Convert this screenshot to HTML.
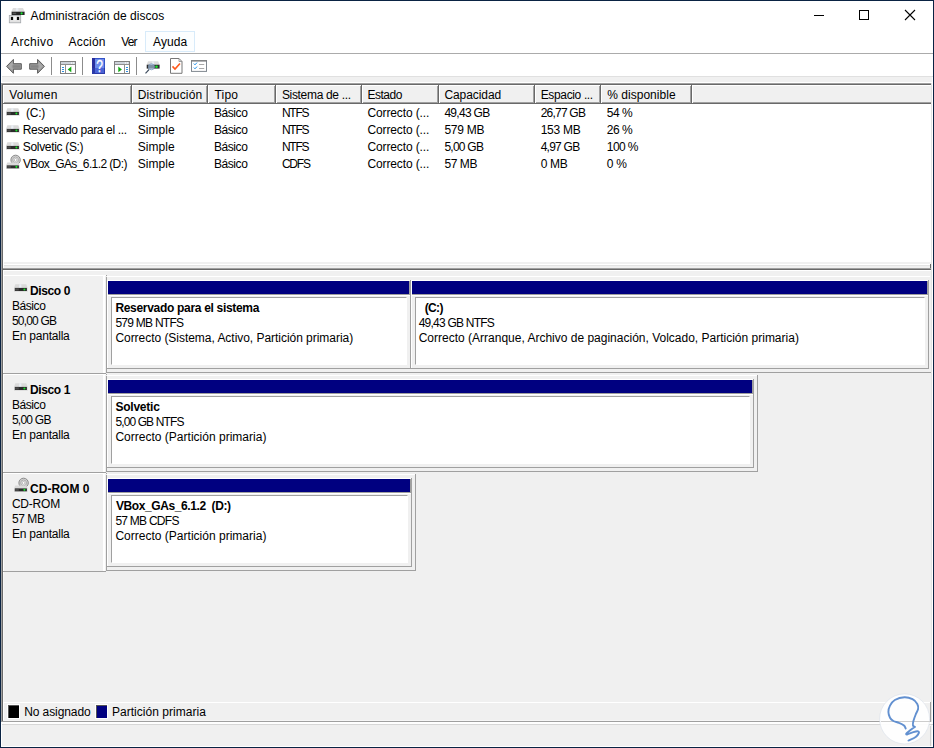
<!DOCTYPE html>
<html lang="es">
<head>
<meta charset="utf-8">
<title>Administración de discos</title>
<style>
html,body{margin:0;padding:0}
body{width:934px;height:748px;position:relative;overflow:hidden;background:#f0f0f0;font:12px "Liberation Sans",sans-serif;color:#000}
.a{position:absolute;box-sizing:border-box}
.t{position:absolute;white-space:pre;line-height:14px;height:14px}
.w{background:#fff}
.g{background:#a0a0a0}
.d{background:#696969}
.navy{background:#000080}
svg{position:absolute;overflow:visible}
</style>
</head>
<body>
<!-- title + menu + toolbar -->
<div class="a w" style="left:1px;top:1px;width:932px;height:75px"></div>
<div class="a" style="left:1px;top:53px;width:932px;height:1px;background:#ababab"></div>
<div class="a" style="left:1px;top:76px;width:932px;height:1px;background:#e0e0e0"></div>
<div class="a" style="left:145px;top:31px;width:50px;height:21px;border:1px solid #d8ebfa;background:#fcfeff"></div>
<!-- list view -->
<div class="a w" style="left:1px;top:82px;width:932px;height:1px"></div>
<div class="a" id="list" style="left:1px;top:83px;width:931px;height:181px;background:#fff;border-left:1px solid #a0a0a0;border-top:1px solid #a0a0a0;border-right:1px solid #e3e3e3;border-bottom:1px solid #fff"></div>
<div class="a" style="left:2px;top:84px;width:929px;height:179px;border-left:1px solid #696969;border-top:1px solid #696969;border-bottom:1px solid #f0f0f0"></div>
<!-- splitter + lower pane -->
<div class="a" style="left:3px;top:265px;width:928px;height:1px;background:#e3e3e3"></div>
<div class="a g" style="left:1px;top:83px;width:1px;height:639px"></div>
<div class="a d" style="left:2px;top:84px;width:1px;height:637px"></div>
<div class="a w" style="left:3px;top:85px;width:1px;height:636px"></div>
<div class="a" style="left:4px;top:262px;width:927px;height:2px;background:#f0f0f0"></div>
<div class="a w" style="left:3px;top:264px;width:929px;height:1px"></div>
<div class="a d" style="left:930px;top:264px;width:1px;height:5px"></div>
<div class="a g" style="left:3px;top:268px;width:928px;height:1px"></div>
<div class="a d" style="left:3px;top:269px;width:928px;height:1px"></div>
<div class="a w" style="left:3px;top:270px;width:928px;height:1px"></div>
<div class="a" style="left:931px;top:83px;width:1px;height:639px;background:#e3e3e3"></div>
<div class="a w" style="left:932px;top:77px;width:1px;height:670px"></div>
<div class="a" style="left:3px;top:85px;width:129px;height:19px;background:#f0f0f0;"></div>
<div class="a" style="left:3px;top:85px;width:129px;height:1px;background:#fff;"></div>
<div class="a" style="left:3px;top:85px;width:1px;height:18px;background:#fff;"></div>
<div class="a" style="left:4px;top:102px;width:128px;height:1px;background:#a0a0a0;"></div>
<div class="a" style="left:3px;top:103px;width:129px;height:1px;background:#696969;"></div>
<div class="a" style="left:130px;top:86px;width:1px;height:17px;background:#a0a0a0;"></div>
<div class="a" style="left:131px;top:85px;width:1px;height:19px;background:#696969;"></div>
<div class="a" style="left:132px;top:85px;width:76px;height:19px;background:#f0f0f0;"></div>
<div class="a" style="left:132px;top:85px;width:76px;height:1px;background:#fff;"></div>
<div class="a" style="left:132px;top:85px;width:1px;height:18px;background:#fff;"></div>
<div class="a" style="left:133px;top:102px;width:75px;height:1px;background:#a0a0a0;"></div>
<div class="a" style="left:132px;top:103px;width:76px;height:1px;background:#696969;"></div>
<div class="a" style="left:206px;top:86px;width:1px;height:17px;background:#a0a0a0;"></div>
<div class="a" style="left:207px;top:85px;width:1px;height:19px;background:#696969;"></div>
<div class="a" style="left:208px;top:85px;width:68px;height:19px;background:#f0f0f0;"></div>
<div class="a" style="left:208px;top:85px;width:68px;height:1px;background:#fff;"></div>
<div class="a" style="left:208px;top:85px;width:1px;height:18px;background:#fff;"></div>
<div class="a" style="left:209px;top:102px;width:67px;height:1px;background:#a0a0a0;"></div>
<div class="a" style="left:208px;top:103px;width:68px;height:1px;background:#696969;"></div>
<div class="a" style="left:274px;top:86px;width:1px;height:17px;background:#a0a0a0;"></div>
<div class="a" style="left:275px;top:85px;width:1px;height:19px;background:#696969;"></div>
<div class="a" style="left:276px;top:85px;width:86px;height:19px;background:#f0f0f0;"></div>
<div class="a" style="left:276px;top:85px;width:86px;height:1px;background:#fff;"></div>
<div class="a" style="left:276px;top:85px;width:1px;height:18px;background:#fff;"></div>
<div class="a" style="left:277px;top:102px;width:85px;height:1px;background:#a0a0a0;"></div>
<div class="a" style="left:276px;top:103px;width:86px;height:1px;background:#696969;"></div>
<div class="a" style="left:360px;top:86px;width:1px;height:17px;background:#a0a0a0;"></div>
<div class="a" style="left:361px;top:85px;width:1px;height:19px;background:#696969;"></div>
<div class="a" style="left:362px;top:85px;width:77px;height:19px;background:#f0f0f0;"></div>
<div class="a" style="left:362px;top:85px;width:77px;height:1px;background:#fff;"></div>
<div class="a" style="left:362px;top:85px;width:1px;height:18px;background:#fff;"></div>
<div class="a" style="left:363px;top:102px;width:76px;height:1px;background:#a0a0a0;"></div>
<div class="a" style="left:362px;top:103px;width:77px;height:1px;background:#696969;"></div>
<div class="a" style="left:437px;top:86px;width:1px;height:17px;background:#a0a0a0;"></div>
<div class="a" style="left:438px;top:85px;width:1px;height:19px;background:#696969;"></div>
<div class="a" style="left:439px;top:85px;width:96px;height:19px;background:#f0f0f0;"></div>
<div class="a" style="left:439px;top:85px;width:96px;height:1px;background:#fff;"></div>
<div class="a" style="left:439px;top:85px;width:1px;height:18px;background:#fff;"></div>
<div class="a" style="left:440px;top:102px;width:95px;height:1px;background:#a0a0a0;"></div>
<div class="a" style="left:439px;top:103px;width:96px;height:1px;background:#696969;"></div>
<div class="a" style="left:533px;top:86px;width:1px;height:17px;background:#a0a0a0;"></div>
<div class="a" style="left:534px;top:85px;width:1px;height:19px;background:#696969;"></div>
<div class="a" style="left:535px;top:85px;width:66px;height:19px;background:#f0f0f0;"></div>
<div class="a" style="left:535px;top:85px;width:66px;height:1px;background:#fff;"></div>
<div class="a" style="left:535px;top:85px;width:1px;height:18px;background:#fff;"></div>
<div class="a" style="left:536px;top:102px;width:65px;height:1px;background:#a0a0a0;"></div>
<div class="a" style="left:535px;top:103px;width:66px;height:1px;background:#696969;"></div>
<div class="a" style="left:599px;top:86px;width:1px;height:17px;background:#a0a0a0;"></div>
<div class="a" style="left:600px;top:85px;width:1px;height:19px;background:#696969;"></div>
<div class="a" style="left:601px;top:85px;width:91px;height:19px;background:#f0f0f0;"></div>
<div class="a" style="left:601px;top:85px;width:91px;height:1px;background:#fff;"></div>
<div class="a" style="left:601px;top:85px;width:1px;height:18px;background:#fff;"></div>
<div class="a" style="left:602px;top:102px;width:90px;height:1px;background:#a0a0a0;"></div>
<div class="a" style="left:601px;top:103px;width:91px;height:1px;background:#696969;"></div>
<div class="a" style="left:690px;top:86px;width:1px;height:17px;background:#a0a0a0;"></div>
<div class="a" style="left:691px;top:85px;width:1px;height:19px;background:#696969;"></div>
<div class="a" style="left:692px;top:85px;width:239px;height:19px;background:#f0f0f0;"></div>
<div class="a" style="left:692px;top:85px;width:239px;height:1px;background:#fff;"></div>
<div class="a" style="left:692px;top:85px;width:1px;height:18px;background:#fff;"></div>
<div class="a" style="left:693px;top:102px;width:238px;height:1px;background:#a0a0a0;"></div>
<div class="a" style="left:692px;top:103px;width:239px;height:1px;background:#696969;"></div>
<div class="a" style="left:3px;top:275px;width:103px;height:1px;background:#fff;"></div>
<div class="a" style="left:3px;top:275px;width:1px;height:99px;background:#fff;"></div>
<div class="a" style="left:103px;top:275px;width:2px;height:99px;background:#fff;"></div>
<div class="a" style="left:3px;top:373px;width:103px;height:1px;background:#a0a0a0;"></div>
<div class="a" style="left:106px;top:275px;width:1px;height:1px;background:#a0a0a0;"></div>
<div class="a" style="left:106px;top:277px;width:1px;height:96px;background:#a0a0a0;"></div>
<div class="a" style="left:107px;top:276px;width:823px;height:1px;background:#fff;"></div>
<div class="a" style="left:106px;top:372px;width:825px;height:1px;background:#a0a0a0;"></div>
<div class="a" style="left:107px;top:280px;width:303px;height:1px;background:#fff;"></div>
<div class="a" style="left:107px;top:280px;width:1px;height:88px;background:#fff;"></div>
<div class="a" style="left:108px;top:281px;width:301px;height:13px;background:#000080;"></div>
<div class="a" style="left:409px;top:281px;width:1px;height:14px;background:#a0a0a0;"></div>
<div class="a" style="left:108px;top:294px;width:302px;height:1px;background:#a0a0a0;"></div>
<div class="a" style="left:108px;top:295px;width:302px;height:1px;background:#fff;"></div>
<div class="a" style="left:410px;top:280px;width:1px;height:89px;background:#a0a0a0;"></div>
<div class="a" style="left:107px;top:368px;width:304px;height:1px;background:#a0a0a0;"></div>
<div class="a" style="left:111px;top:297px;width:296px;height:68px;background:#fff;border-left:1px solid #a0a0a0;border-top:1px solid #a0a0a0;border-right:1px solid #fff;border-bottom:1px solid #fff"></div>
<div class="a" style="left:411px;top:280px;width:517px;height:1px;background:#fff;"></div>
<div class="a" style="left:411px;top:280px;width:1px;height:88px;background:#fff;"></div>
<div class="a" style="left:412px;top:281px;width:515px;height:13px;background:#000080;"></div>
<div class="a" style="left:927px;top:281px;width:1px;height:14px;background:#a0a0a0;"></div>
<div class="a" style="left:412px;top:294px;width:516px;height:1px;background:#a0a0a0;"></div>
<div class="a" style="left:412px;top:295px;width:516px;height:1px;background:#fff;"></div>
<div class="a" style="left:928px;top:280px;width:1px;height:89px;background:#a0a0a0;"></div>
<div class="a" style="left:411px;top:368px;width:518px;height:1px;background:#a0a0a0;"></div>
<div class="a" style="left:415px;top:297px;width:510px;height:68px;background:#fff;border-left:1px solid #a0a0a0;border-top:1px solid #a0a0a0;border-right:1px solid #fff;border-bottom:1px solid #fff"></div>
<div class="a" style="left:3px;top:374px;width:103px;height:1px;background:#fff;"></div>
<div class="a" style="left:3px;top:374px;width:1px;height:99px;background:#fff;"></div>
<div class="a" style="left:103px;top:374px;width:2px;height:99px;background:#fff;"></div>
<div class="a" style="left:3px;top:472px;width:103px;height:1px;background:#a0a0a0;"></div>
<div class="a" style="left:106px;top:374px;width:1px;height:1px;background:#a0a0a0;"></div>
<div class="a" style="left:106px;top:376px;width:1px;height:96px;background:#a0a0a0;"></div>
<div class="a" style="left:107px;top:375px;width:650px;height:1px;background:#fff;"></div>
<div class="a" style="left:106px;top:471px;width:652px;height:1px;background:#a0a0a0;"></div>
<div class="a" style="left:757px;top:375px;width:1px;height:97px;background:#a0a0a0;"></div>
<div class="a" style="left:107px;top:379px;width:646px;height:1px;background:#fff;"></div>
<div class="a" style="left:107px;top:379px;width:1px;height:88px;background:#fff;"></div>
<div class="a" style="left:108px;top:380px;width:644px;height:13px;background:#000080;"></div>
<div class="a" style="left:752px;top:380px;width:1px;height:14px;background:#a0a0a0;"></div>
<div class="a" style="left:108px;top:393px;width:645px;height:1px;background:#a0a0a0;"></div>
<div class="a" style="left:108px;top:394px;width:645px;height:1px;background:#fff;"></div>
<div class="a" style="left:753px;top:379px;width:1px;height:89px;background:#a0a0a0;"></div>
<div class="a" style="left:107px;top:467px;width:647px;height:1px;background:#a0a0a0;"></div>
<div class="a" style="left:111px;top:396px;width:639px;height:68px;background:#fff;border-left:1px solid #a0a0a0;border-top:1px solid #a0a0a0;border-right:1px solid #fff;border-bottom:1px solid #fff"></div>
<div class="a" style="left:3px;top:473px;width:103px;height:1px;background:#fff;"></div>
<div class="a" style="left:3px;top:473px;width:1px;height:99px;background:#fff;"></div>
<div class="a" style="left:103px;top:473px;width:2px;height:99px;background:#fff;"></div>
<div class="a" style="left:3px;top:571px;width:103px;height:1px;background:#a0a0a0;"></div>
<div class="a" style="left:106px;top:473px;width:1px;height:1px;background:#a0a0a0;"></div>
<div class="a" style="left:106px;top:475px;width:1px;height:96px;background:#a0a0a0;"></div>
<div class="a" style="left:107px;top:474px;width:308px;height:1px;background:#fff;"></div>
<div class="a" style="left:106px;top:570px;width:310px;height:1px;background:#a0a0a0;"></div>
<div class="a" style="left:415px;top:474px;width:1px;height:97px;background:#a0a0a0;"></div>
<div class="a" style="left:107px;top:478px;width:304px;height:1px;background:#fff;"></div>
<div class="a" style="left:107px;top:478px;width:1px;height:88px;background:#fff;"></div>
<div class="a" style="left:108px;top:479px;width:302px;height:13px;background:#000080;"></div>
<div class="a" style="left:410px;top:479px;width:1px;height:14px;background:#a0a0a0;"></div>
<div class="a" style="left:108px;top:492px;width:303px;height:1px;background:#a0a0a0;"></div>
<div class="a" style="left:108px;top:493px;width:303px;height:1px;background:#fff;"></div>
<div class="a" style="left:411px;top:478px;width:1px;height:89px;background:#a0a0a0;"></div>
<div class="a" style="left:107px;top:566px;width:305px;height:1px;background:#a0a0a0;"></div>
<div class="a" style="left:111px;top:495px;width:297px;height:68px;background:#fff;border-left:1px solid #a0a0a0;border-top:1px solid #a0a0a0;border-right:1px solid #fff;border-bottom:1px solid #fff"></div>
<!-- legend -->
<div class="a w" style="left:3px;top:702px;width:927px;height:1px"></div>
<div class="a" style="left:3px;top:720px;width:927px;height:1px;background:#f6f6f6"></div>
<div class="a g" style="left:1px;top:721px;width:930px;height:1px"></div>
<div class="a g" style="left:930px;top:702px;width:1px;height:20px"></div>
<div class="a" style="left:930px;top:726px;width:1px;height:20px;background:#d0d0d0"></div>
<div class="a w" style="left:1px;top:722px;width:932px;height:2px"></div>
<div class="a" style="left:1px;top:724px;width:932px;height:1px;background:#d7d7d7"></div>
<div class="a" style="left:7px;top:704px;width:13px;height:15px;background:#fff"></div>
<div class="a" style="left:8px;top:705px;width:11px;height:13px;background:#000;border-left:1px solid #555;border-top:1px solid #555"></div>
<div class="a" style="left:95px;top:704px;width:13px;height:15px;background:#fff"></div>
<div class="a" style="left:96px;top:705px;width:11px;height:13px;background:#000080;border-left:1px solid #555;border-top:1px solid #555"></div>
<svg style="left:8px;top:7px" width="18" height="17" viewBox="0 0 18 17"><path d="M5 1H15L16.7 4.8H3.3Z" fill="#dddddd"/><path d="M8 1H10.3L10.5 4.8H7.7Z" fill="#e8edf3"/><rect x="3.6" y="4.7" width="13" height="3.3" fill="#262626"/><rect x="4.6" y="5.6" width="3.6" height="1.5" fill="#555"/><circle cx="13.6" cy="6.4" r="1.05" fill="#12e62a"/><rect x="1.3" y="8.4" width="11.4" height="7.4" fill="#e2e2e2" stroke="#a3a7ab" stroke-width="0.8"/><rect x="5.3" y="9.5" width="3.2" height="3.8" fill="#f6f6f6"/><rect x="2.9" y="9.9" width="2.2" height="3.1" fill="#0a0a0a"/><rect x="8.9" y="9.9" width="2.2" height="3.1" fill="#0a0a0a"/></svg>
<div class="a" style="left:814px;top:15px;width:10px;height:1px;background:#000;"></div>
<div class="a" style="left:859px;top:10px;width:10px;height:10px;border:1px solid #000"></div>
<svg style="left:905px;top:10px" width="10" height="10" viewBox="0 0 10 10"><path d="M0 0L10 10M10 0L0 10" stroke="#000" stroke-width="1.1" fill="none"/></svg>
<svg style="left:6px;top:59px" width="16" height="15" viewBox="0 0 16 15"><path d="M0.6 7.35L7.4 0.4V4.7H15.3V10.2H7.4V14.3Z" fill="#9c9c9c" stroke="#5a5a5a" stroke-width="1" stroke-linejoin="round"/><path d="M5.5 6.2H14V8.8H5.5Z" fill="#7e7e7e" fill-opacity="0.75"/><path d="M2.2 7.35L6.6 3.1V11.6Z" fill="#b4b4b4" fill-opacity="0.6"/></svg>
<svg style="left:29px;top:59px" width="16" height="15" viewBox="0 0 16 15"><g transform="translate(16,0) scale(-1,1)"><path d="M0.6 7.35L7.4 0.4V4.7H15.3V10.2H7.4V14.3Z" fill="#9c9c9c" stroke="#5a5a5a" stroke-width="1" stroke-linejoin="round"/><path d="M5.5 6.2H14V8.8H5.5Z" fill="#7e7e7e" fill-opacity="0.75"/><path d="M2.2 7.35L6.6 3.1V11.6Z" fill="#b4b4b4" fill-opacity="0.6"/></g></svg>
<div class="a" style="left:51px;top:57px;width:1px;height:18px;background:#8c8c8c;"></div>
<div class="a" style="left:82px;top:57px;width:1px;height:18px;background:#8c8c8c;"></div>
<div class="a" style="left:136px;top:57px;width:1px;height:18px;background:#8c8c8c;"></div>
<svg style="left:60px;top:61px" width="16" height="13" viewBox="0 0 16 13"><rect x="0.5" y="0.5" width="15" height="12" fill="#fff" stroke="#808080"/><rect x="1" y="1" width="14" height="2" fill="#cdd2da"/><rect x="1" y="3" width="14" height="1" fill="#8f8f8f"/><rect x="11" y="1.4" width="1.2" height="1.2" fill="#fff"/><rect x="13" y="1.4" width="1.2" height="1.2" fill="#fff"/><rect x="5" y="4" width="1" height="8" fill="#8f8f8f"/><rect x="2" y="6" width="2" height="1" fill="#2f8fe0"/><rect x="2" y="8" width="2" height="1" fill="#2f8fe0"/><rect x="2" y="10" width="2" height="1" fill="#2f8fe0"/><path d="M11.3 5.6V11.2L7.7 8.4Z" fill="#11a911"/></svg>
<svg style="left:114px;top:61px" width="16" height="13" viewBox="0 0 16 13"><rect x="0.5" y="0.5" width="15" height="12" fill="#fff" stroke="#808080"/><rect x="1" y="1" width="14" height="2" fill="#cdd2da"/><rect x="1" y="3" width="14" height="1" fill="#8f8f8f"/><rect x="11" y="1.4" width="1.2" height="1.2" fill="#fff"/><rect x="13" y="1.4" width="1.2" height="1.2" fill="#fff"/><rect x="10" y="4" width="1" height="8" fill="#8f8f8f"/><rect x="12" y="6" width="2" height="1" fill="#2f8fe0"/><rect x="12" y="8" width="2" height="1" fill="#2f8fe0"/><rect x="12" y="10" width="2" height="1" fill="#2f8fe0"/><path d="M4.3 5.6V11.2L7.9 8.4Z" fill="#11a911"/></svg>
<svg style="left:92px;top:58px" width="13" height="16" viewBox="0 0 13 16"><rect x="0" y="0" width="13" height="16" fill="#3553c8"/><rect x="0" y="0" width="3" height="16" fill="#2a2f9c"/><rect x="0" y="10" width="13" height="6" fill="#2b3aa8"/><rect x="3" y="1" width="9" height="14" fill="#6c8cec"/><rect x="3" y="10" width="9" height="5" fill="#4a63d6"/><text transform="translate(7.6 13.6) scale(0.8 1.06)" x="0" y="0" font-family="Liberation Sans, sans-serif" font-size="15" fill="#fff" stroke="#fff" stroke-width="0.3" text-anchor="middle">?</text></svg>
<svg style="left:145px;top:61px" width="16" height="14" viewBox="0 0 16 14"><path d="M3 0.3H13.2L14.6 3.8H1.7Z" fill="#dcdcdc"/><path d="M7 0.3H9L9.2 3.8H6.8Z" fill="#e9edf2"/><rect x="1.7" y="3.7" width="12.9" height="3.9" fill="#2b2b2b"/><circle cx="11.5" cy="5.7" r="1.3" fill="#19e32c"/><path d="M4.2 8.3L0.5 12.3" stroke="#3c4a5c" stroke-width="1.2"/><circle cx="6.4" cy="5.8" r="3" fill="#b5d3f2" fill-opacity="0.6" stroke="#7f9cc0" stroke-width="0.8"/></svg>
<svg style="left:170px;top:58px" width="13" height="16" viewBox="0 0 13 16"><path d="M0.5 0.5H9L12 3.5V15.3H0.5Z" fill="#fff" stroke="#777" stroke-width="1"/><path d="M9 0.5V3.5H12" fill="none" stroke="#888" stroke-width="0.8"/><path d="M2.5 8.4L5 11L10 5.5" fill="none" stroke="#ff5a1c" stroke-width="1.6"/></svg>
<svg style="left:191px;top:60px" width="16" height="12" viewBox="0 0 16 12"><rect x="0.5" y="0.8" width="15" height="10.6" fill="#fff" stroke="#808890" stroke-width="1"/><rect x="0" y="0.2" width="16" height="1.2" fill="#7a7a7a"/><path d="M2.8 3.6L4 4.8L6 2.6M2.8 7.6L4 8.8L6 6.6" fill="none" stroke="#1e90e8" stroke-width="1"/><rect x="8" y="4" width="5.2" height="0.9" fill="#a0a0a0"/><rect x="8" y="8" width="5.2" height="0.9" fill="#a0a0a0"/></svg>
<svg style="left:6.2px;top:108px" width="14" height="8" viewBox="0 0 14 8"><path d="M1.3 0.2H12.3L13.7 3.9V7.7H0V3.9Z" fill="#dadada"/><path d="M5.4 0.2H7.3L7.5 3.9H5Z" fill="#e9eef4"/><rect x="0.8" y="3.9" width="12.1" height="3.1" fill="#2b2b2b"/><rect x="1.2" y="4.4" width="3.6" height="2.1" fill="#4d4d4d"/><circle cx="10.4" cy="5.45" r="1.05" fill="#19e32c"/></svg>
<svg style="left:6.2px;top:125px" width="14" height="8" viewBox="0 0 14 8"><path d="M1.3 0.2H12.3L13.7 3.9V7.7H0V3.9Z" fill="#dadada"/><path d="M5.4 0.2H7.3L7.5 3.9H5Z" fill="#e9eef4"/><rect x="0.8" y="3.9" width="12.1" height="3.1" fill="#2b2b2b"/><rect x="1.2" y="4.4" width="3.6" height="2.1" fill="#4d4d4d"/><circle cx="10.4" cy="5.45" r="1.05" fill="#19e32c"/></svg>
<svg style="left:6.2px;top:142px" width="14" height="8" viewBox="0 0 14 8"><path d="M1.3 0.2H12.3L13.7 3.9V7.7H0V3.9Z" fill="#dadada"/><path d="M5.4 0.2H7.3L7.5 3.9H5Z" fill="#e9eef4"/><rect x="0.8" y="3.9" width="12.1" height="3.1" fill="#2b2b2b"/><rect x="1.2" y="4.4" width="3.6" height="2.1" fill="#4d4d4d"/><circle cx="10.4" cy="5.45" r="1.05" fill="#19e32c"/></svg>
<svg style="left:6.2px;top:155.3px" width="14" height="14" viewBox="0 0 14 14"><circle cx="9.6" cy="4.9" r="4.7" fill="#d2d2d2" stroke="#8a8a8a" stroke-width="1"/><circle cx="9.6" cy="4.9" r="2.9" fill="#e6e6e6" stroke="#a6a6a6" stroke-width="0.9"/><circle cx="9.6" cy="4.9" r="1.4" fill="#fff" stroke="#999" stroke-width="0.6"/><path d="M1.3 7.4H12.3L13.7 10.4V13.9H0V10.4Z" fill="#dadada"/><rect x="0.8" y="10.4" width="12.1" height="2.9" fill="#2b2b2b"/><rect x="1.2" y="10.9" width="3.6" height="1.9" fill="#4d4d4d"/><circle cx="10.4" cy="11.85" r="1.05" fill="#19e32c"/></svg>
<svg style="left:13.9px;top:284px" width="14" height="8" viewBox="0 0 14 8"><path d="M1.3 0.2H12.3L13.7 3.9V7.7H0V3.9Z" fill="#dadada"/><path d="M5.4 0.2H7.3L7.5 3.9H5Z" fill="#e9eef4"/><rect x="0.8" y="3.9" width="12.1" height="3.1" fill="#2b2b2b"/><rect x="1.2" y="4.4" width="3.6" height="2.1" fill="#4d4d4d"/><circle cx="10.4" cy="5.45" r="1.05" fill="#19e32c"/></svg>
<svg style="left:13.9px;top:383px" width="14" height="8" viewBox="0 0 14 8"><path d="M1.3 0.2H12.3L13.7 3.9V7.7H0V3.9Z" fill="#dadada"/><path d="M5.4 0.2H7.3L7.5 3.9H5Z" fill="#e9eef4"/><rect x="0.8" y="3.9" width="12.1" height="3.1" fill="#2b2b2b"/><rect x="1.2" y="4.4" width="3.6" height="2.1" fill="#4d4d4d"/><circle cx="10.4" cy="5.45" r="1.05" fill="#19e32c"/></svg>
<svg style="left:14.2px;top:478.3px" width="14" height="14" viewBox="0 0 14 14"><circle cx="9.6" cy="4.9" r="4.7" fill="#d2d2d2" stroke="#8a8a8a" stroke-width="1"/><circle cx="9.6" cy="4.9" r="2.9" fill="#e6e6e6" stroke="#a6a6a6" stroke-width="0.9"/><circle cx="9.6" cy="4.9" r="1.4" fill="#fff" stroke="#999" stroke-width="0.6"/><path d="M1.3 7.4H12.3L13.7 10.4V13.9H0V10.4Z" fill="#dadada"/><rect x="0.8" y="10.4" width="12.1" height="2.9" fill="#2b2b2b"/><rect x="1.2" y="10.9" width="3.6" height="1.9" fill="#4d4d4d"/><circle cx="10.4" cy="11.85" r="1.05" fill="#19e32c"/></svg>
<span class="t" style="left:30.6px;top:9px;letter-spacing:0.038px;">Administración de discos</span>
<span class="t" style="left:11.1px;top:35px;letter-spacing:0.331px;">Archivo</span>
<span class="t" style="left:68.5px;top:35px;letter-spacing:0.194px;">Acción</span>
<span class="t" style="left:121.2px;top:35px;letter-spacing:-0.808px;">Ver</span>
<span class="t" style="left:153.0px;top:35px;letter-spacing:0.122px;">Ayuda</span>
<span class="t" style="left:9.2px;top:88px;letter-spacing:0.249px;">Volumen</span>
<span class="t" style="left:137.7px;top:88px;letter-spacing:0.163px;">Distribución</span>
<span class="t" style="left:214.5px;top:88px;letter-spacing:0.198px;">Tipo</span>
<span class="t" style="left:281.9px;top:88px;letter-spacing:-0.321px;">Sistema de ...</span>
<span class="t" style="left:367.4px;top:88px;letter-spacing:-0.472px;">Estado</span>
<span class="t" style="left:444.4px;top:88px;letter-spacing:-0.072px;">Capacidad</span>
<span class="t" style="left:540.7px;top:88px;letter-spacing:-0.353px;">Espacio ...</span>
<span class="t" style="left:607.2px;top:88px;letter-spacing:0.032px;">% disponible</span>
<span class="t" style="left:26.1px;top:106px;letter-spacing:-0.300px;">(C:)</span>
<span class="t" style="left:137.7px;top:106px;letter-spacing:0.062px;">Simple</span>
<span class="t" style="left:213.9px;top:106px;letter-spacing:-0.406px;">Básico</span>
<span class="t" style="left:281.9px;top:106px;letter-spacing:-1.200px;">NTFS</span>
<span class="t" style="left:367.4px;top:106px;letter-spacing:-0.113px;">Correcto (...</span>
<span class="t" style="left:444.4px;top:106px;letter-spacing:-0.700px;">49,43 GB</span>
<span class="t" style="left:540.7px;top:106px;letter-spacing:-0.786px;">26,77 GB</span>
<span class="t" style="left:606.8px;top:106px;letter-spacing:-0.453px;">54 %</span>
<span class="t" style="left:22.8px;top:123px;letter-spacing:-0.360px;">Reservado para el ...</span>
<span class="t" style="left:137.7px;top:123px;letter-spacing:0.062px;">Simple</span>
<span class="t" style="left:213.9px;top:123px;letter-spacing:-0.406px;">Básico</span>
<span class="t" style="left:281.9px;top:123px;letter-spacing:-1.200px;">NTFS</span>
<span class="t" style="left:367.4px;top:123px;letter-spacing:-0.113px;">Correcto (...</span>
<span class="t" style="left:444.4px;top:123px;letter-spacing:-0.272px;">579 MB</span>
<span class="t" style="left:540.7px;top:123px;letter-spacing:-0.272px;">153 MB</span>
<span class="t" style="left:606.8px;top:123px;letter-spacing:-0.453px;">26 %</span>
<span class="t" style="left:22.8px;top:140px;letter-spacing:-0.324px;">Solvetic (S:)</span>
<span class="t" style="left:137.7px;top:140px;letter-spacing:0.062px;">Simple</span>
<span class="t" style="left:213.9px;top:140px;letter-spacing:-0.406px;">Básico</span>
<span class="t" style="left:281.9px;top:140px;letter-spacing:-1.200px;">NTFS</span>
<span class="t" style="left:367.4px;top:140px;letter-spacing:-0.113px;">Correcto (...</span>
<span class="t" style="left:444.4px;top:140px;letter-spacing:-0.755px;">5,00 GB</span>
<span class="t" style="left:540.7px;top:140px;letter-spacing:-0.755px;">4,97 GB</span>
<span class="t" style="left:606.8px;top:140px;letter-spacing:-0.583px;">100 %</span>
<span class="t" style="left:22.9px;top:157px;letter-spacing:-0.605px;">VBox_GAs_6.1.2 (D:)</span>
<span class="t" style="left:137.7px;top:157px;letter-spacing:0.062px;">Simple</span>
<span class="t" style="left:213.9px;top:157px;letter-spacing:-0.406px;">Básico</span>
<span class="t" style="left:281.9px;top:157px;letter-spacing:-1.200px;">CDFS</span>
<span class="t" style="left:367.4px;top:157px;letter-spacing:-0.113px;">Correcto (...</span>
<span class="t" style="left:444.4px;top:157px;letter-spacing:-0.422px;">57 MB</span>
<span class="t" style="left:540.7px;top:157px;letter-spacing:-0.339px;">0 MB</span>
<span class="t" style="left:606.8px;top:157px;letter-spacing:-0.294px;">0 %</span>
<span class="t" style="left:30.0px;top:284px;letter-spacing:-0.381px;font-weight:bold;">Disco 0</span>
<span class="t" style="left:11.9px;top:299px;letter-spacing:-0.406px;">Básico</span>
<span class="t" style="left:11.9px;top:314px;letter-spacing:-0.800px;">50,00 GB</span>
<span class="t" style="left:11.9px;top:329px;letter-spacing:-0.215px;">En pantalla</span>
<span class="t" style="left:30.0px;top:383px;letter-spacing:-0.381px;font-weight:bold;">Disco 1</span>
<span class="t" style="left:11.9px;top:398px;letter-spacing:-0.406px;">Básico</span>
<span class="t" style="left:11.9px;top:413px;letter-spacing:-0.755px;">5,00 GB</span>
<span class="t" style="left:11.9px;top:428px;letter-spacing:-0.215px;">En pantalla</span>
<span class="t" style="left:30.0px;top:482px;letter-spacing:0.022px;font-weight:bold;">CD-ROM 0</span>
<span class="t" style="left:11.9px;top:497px;letter-spacing:-0.206px;">CD-ROM</span>
<span class="t" style="left:11.9px;top:512px;letter-spacing:-0.422px;">57 MB</span>
<span class="t" style="left:11.9px;top:527px;letter-spacing:-0.215px;">En pantalla</span>
<span class="t" style="left:115.4px;top:301px;letter-spacing:-0.309px;font-weight:bold;">Reservado para el sistema</span>
<span class="t" style="left:115.4px;top:316px;letter-spacing:-0.743px;">579 MB NTFS</span>
<span class="t" style="left:115.4px;top:331px;letter-spacing:-0.036px;">Correcto (Sistema, Activo, Partición primaria)</span>
<span class="t" style="left:424.8px;top:301px;letter-spacing:-0.685px;font-weight:bold;">(C:)</span>
<span class="t" style="left:418.7px;top:316px;letter-spacing:-0.765px;">49,43 GB NTFS</span>
<span class="t" style="left:418.7px;top:331px;">Correcto (Arranque, Archivo de paginación, Volcado, Partición primaria)</span>
<span class="t" style="left:115.4px;top:400px;letter-spacing:-0.219px;font-weight:bold;">Solvetic</span>
<span class="t" style="left:115.4px;top:415px;letter-spacing:-0.882px;">5,00 GB NTFS</span>
<span class="t" style="left:115.4px;top:430px;letter-spacing:0.011px;">Correcto (Partición primaria)</span>
<span class="t" style="left:116.0px;top:499px;letter-spacing:-0.406px;font-weight:bold;">VBox_GAs_6.1.2  (D:)</span>
<span class="t" style="left:115.4px;top:514px;letter-spacing:-0.743px;">57 MB CDFS</span>
<span class="t" style="left:115.4px;top:529px;letter-spacing:0.011px;">Correcto (Partición primaria)</span>
<span class="t" style="left:24.2px;top:705px;letter-spacing:-0.089px;">No asignado</span>
<span class="t" style="left:111.9px;top:705px;letter-spacing:0.037px;">Partición primaria</span>
<svg style="left:874px;top:688px" width="60" height="60" viewBox="0 0 60 60"><circle cx="30.6" cy="30.9" r="25" fill="#fff" fill-opacity="0.93" stroke="#d5dde8" stroke-opacity="0.7" stroke-width="0.8"/><rect x="7" y="33" width="49" height="1" fill="#cdcdcd"/><path d="M31.7 40.5C31.4 40.0 31.1 38.5 30.0 37.5C28.9 36.5 26.8 35.5 25.0 34.8C23.2 34.0 20.9 33.9 19.4 33.0C17.9 32.1 16.8 31.2 16.0 29.7C15.2 28.2 14.4 26.1 14.4 24.1C14.4 22.1 14.9 19.6 16.0 17.6C17.1 15.6 18.4 13.4 20.8 12.0C23.2 10.6 27.6 9.3 30.5 9.2C33.5 9.1 36.4 10.1 38.5 11.2C40.6 12.3 42.4 14.4 43.3 16.0C44.2 17.6 44.4 19.1 44.1 20.9C43.8 22.6 42.5 24.5 41.7 26.5C40.9 28.5 39.9 31.2 39.4 33.0C38.9 34.8 38.8 36.5 39.0 37.5C39.2 38.5 40.6 38.7 40.9 38.9C40.2 39.4 37.9 40.9 36.5 42.0C35.1 43.1 32.9 44.9 32.3 45.6C31.7 46.4 32.8 46.4 32.9 46.5C33.8 46.2 36.3 45.1 38.0 44.6C39.7 44.1 42.1 43.2 43.3 43.2C44.4 43.2 45.2 44.0 44.9 44.9C44.6 45.8 43.4 47.6 41.7 48.9C40.0 50.2 35.7 51.9 34.5 52.5" fill="none" stroke="#6290d0" stroke-width="1.9" stroke-linecap="round" stroke-linejoin="round"/></svg>
<div class="a w" style="left:1px;top:76px;width:1px;height:7px"></div>
<div class="a w" style="left:1px;top:722px;width:1px;height:25px"></div>
<div class="a w" style="left:1px;top:746px;width:932px;height:1px"></div>
<div class="a" style="left:3px;top:574px;width:1px;height:128px;background:#f8f8f8"></div>
<!-- window frame -->
<div class="a" style="left:0;top:0;width:934px;height:748px;border:1px solid #0a2343;pointer-events:none"></div>
</body>
</html>
